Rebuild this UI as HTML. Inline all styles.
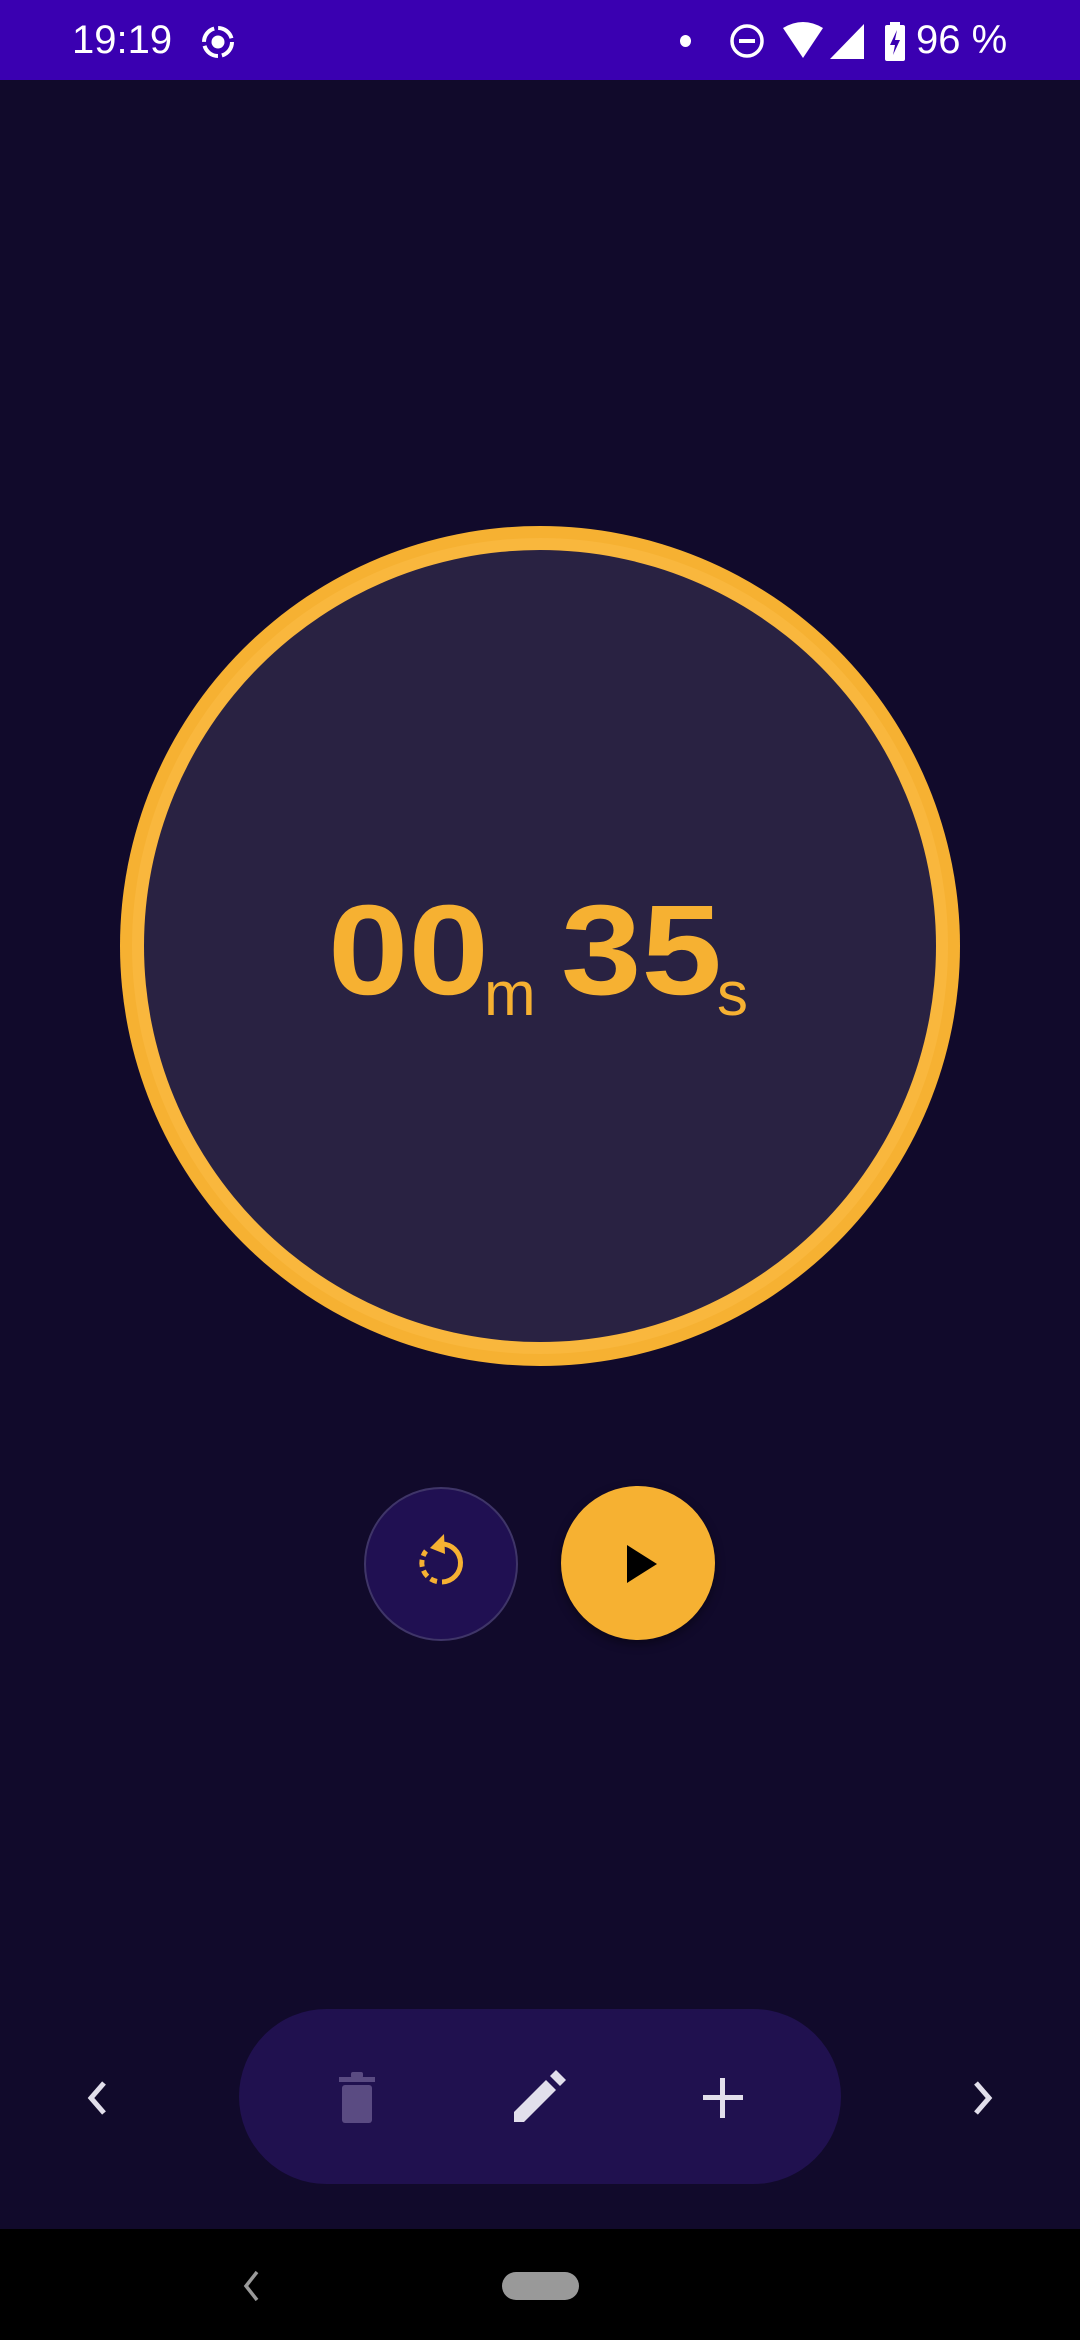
<!DOCTYPE html>
<html><head><meta charset="utf-8"><style>
html,body{margin:0;padding:0;width:1080px;height:2340px;background:#110a2b;overflow:hidden;font-family:"Liberation Sans",sans-serif;position:relative}
.abs{position:absolute}
#sb{left:0;top:0;width:1080px;height:80px;background:#3a00b1;color:#fff}
#nav{left:0;top:2229px;width:1080px;height:111px;background:#000}
.big{position:absolute;font-size:128px;font-weight:bold;line-height:128px;color:#f6b132;top:887px;white-space:nowrap;transform:scaleX(1.13);transform-origin:0 0}
.sm{position:absolute;font-size:62px;line-height:62px;color:#f6b132;top:964px}
</style></head><body>
<div id="sb" class="abs">
 <div class="abs" style="left:72px;top:18px;font-size:40px;">19:19</div>
 <svg class="abs" style="left:198px;top:22px" width="40" height="40" viewBox="0 0 40 40"><circle cx="20" cy="20" r="6.5" fill="#fff"/><circle cx="20" cy="20" r="14" fill="none" stroke="#fff" stroke-width="4" stroke-dasharray="18 4"/></svg>
 <div class="abs" style="left:680px;top:35px;width:11px;height:12px;border-radius:50%;background:#fff"></div>
 <svg class="abs" style="left:728px;top:22px" width="38" height="38" viewBox="0 0 38 38"><circle cx="19" cy="19" r="15" fill="none" stroke="#fff" stroke-width="3.5"/><rect x="11" y="17" width="16" height="4" fill="#fff"/></svg>
 <svg class="abs" style="left:782px;top:22px" width="42" height="38" viewBox="0 0 42 38"><path d="M1 6 Q21 -6 41 6 L21 36 Z" fill="#fff"/></svg>
 <svg class="abs" style="left:830px;top:24px" width="36" height="36" viewBox="0 0 36 36"><path d="M34 0 V35 H0 Z" fill="#fff"/></svg>
 <svg class="abs" style="left:884px;top:22px" width="22" height="40" viewBox="0 0 22 40"><rect x="6" y="0" width="10" height="4" fill="#fff"/><rect x="1" y="3" width="20" height="36" rx="2" fill="#fff"/><path d="M13 8 L6 23 H11 L9 33 L16 18 H11 Z" fill="#3a00b1"/></svg>
 <div class="abs" style="left:916px;top:18px;font-size:40px;">96 %</div>
</div>

<div class="abs" style="left:120px;top:526px;width:840px;height:840px;border-radius:50%;background:#f6b132;"></div>
<div class="abs" style="left:132px;top:538px;width:816px;height:816px;border-radius:50%;background:#f9b73d;"></div>
<div class="abs" style="left:144px;top:550px;width:792px;height:792px;border-radius:50%;background:#292242;"></div>

<div class="big" style="left:328px">00</div>
<div class="sm" style="left:484px">m</div>
<div class="big" style="left:561px">35</div>
<div class="sm" style="left:717px">s</div>

<div class="abs" style="left:364px;top:1487px;width:150px;height:150px;border-radius:50%;background:#201052;border:2px solid #3f3568"></div>
<svg class="abs" style="left:411px;top:1533px" width="60" height="60" viewBox="0 0 60 60"><path d="M30 11 A19 19 0 1 1 31 49" fill="none" stroke="#f6b132" stroke-width="5"/><path d="M26 48.5 A19 19 0 0 1 15 18" fill="none" stroke="#f6b132" stroke-width="5" stroke-dasharray="7 4"/><path d="M33 1 L34 21 L19 15 Z" fill="#f6b132"/></svg>
<div class="abs" style="left:561px;top:1486px;width:154px;height:154px;border-radius:50%;background:#f6b132;box-shadow:0 4px 10px rgba(0,0,0,.4)"></div>
<svg class="abs" style="left:626px;top:1544px" width="34" height="40" viewBox="0 0 34 40"><path d="M1 1 L31 20 L1 39 Z" fill="#000"/></svg>

<div class="abs" style="left:239px;top:2009px;width:602px;height:175px;border-radius:88px;background:#20114f"></div>
<svg class="abs" style="left:336px;top:2070px" width="42" height="56" viewBox="0 0 42 56"><rect x="3" y="7" width="36" height="5" fill="#5a4b82"/><rect x="15" y="2" width="12" height="6" rx="2" fill="#5a4b82"/><rect x="6" y="15" width="30" height="38" rx="3" fill="#5a4b82"/></svg>
<svg class="abs" style="left:512px;top:2068px" width="56" height="58" viewBox="0 0 56 58"><path d="M2 44 L34 12 L44 22 L12 54 H2 Z" fill="#e2dfeb"/><path d="M38 8 L44 2 L54 12 L48 18 Z" fill="#e2dfeb"/></svg>
<svg class="abs" style="left:703px;top:2076px" width="40" height="44" viewBox="0 0 40 44"><rect x="17" y="2" width="5" height="40" fill="#e2dfeb"/><rect x="0" y="19" width="40" height="5" fill="#e2dfeb"/></svg>
<svg class="abs" style="left:84px;top:2080px" width="26" height="36" viewBox="0 0 26 36"><path d="M20 3 L7 18 L20 33" fill="none" stroke="#e2dfeb" stroke-width="5"/></svg>
<svg class="abs" style="left:970px;top:2080px" width="26" height="36" viewBox="0 0 26 36"><path d="M6 3 L19 18 L6 33" fill="none" stroke="#e2dfeb" stroke-width="5"/></svg>

<div id="nav" class="abs">
 <svg class="abs" style="left:240px;top:40px" width="22" height="34" viewBox="0 0 22 34"><path d="M17 3 L6 17 L17 31" fill="none" stroke="#9a9a9a" stroke-width="3.5"/></svg>
 <div class="abs" style="left:502px;top:43px;width:77px;height:28px;border-radius:14px;background:#999"></div>
</div>
</body></html>
